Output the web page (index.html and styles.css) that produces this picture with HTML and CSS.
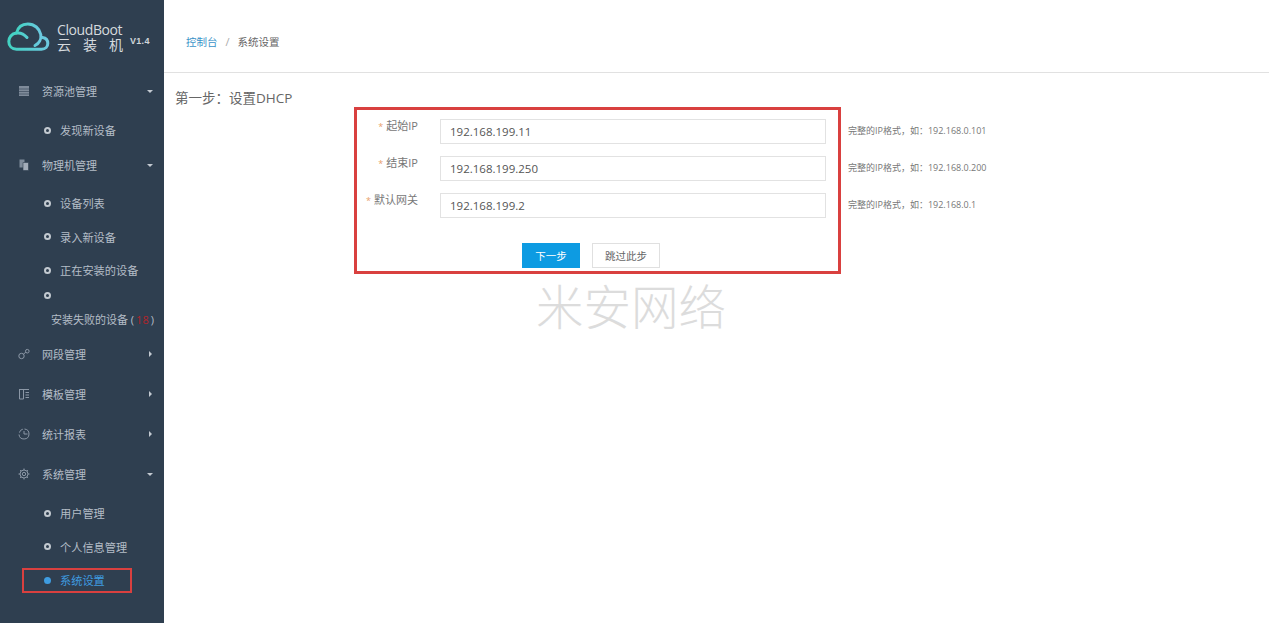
FILE: index.html
```html
<!DOCTYPE html>
<html lang="zh-CN">
<head>
<meta charset="utf-8">
<title>CloudBoot 系统设置</title>
<link rel="stylesheet" href="styles.css">
</head>
<body>
<div class="app">
  <aside class="sidebar">
    <div class="brand">
      <svg class="cloud" viewBox="0 0 44 32" width="44" height="32" aria-hidden="true">
        <defs><linearGradient id="cg" x1="0" y1="0" x2="1" y2="0"><stop offset="0" stop-color="#42d2c2"/><stop offset="1" stop-color="#6cc9e0"/></linearGradient></defs>
        <path d="M21 15.500C18 12 14 10.500 10.500 11C5.500 11.500 2.800 15.500 2.800 19.500C2.800 24 6 27.200 10.500 27.200L35.500 27.200C39.500 27.200 41.800 24.500 41.800 21.500C41.800 18.500 39.800 16 36.500 15.500" fill="none" stroke="url(#cg)" stroke-width="3" stroke-linecap="round"/>
        <path d="M10.500 11C12 5 16.500 2 21.800 2C28.500 2 33.500 6.500 34.800 12.500C35.500 17 33 21.500 29 23.500" fill="none" stroke="url(#cg)" stroke-width="3" stroke-linecap="round"/>
      </svg>
      <div class="brand-text">
        <div class="brand-en">CloudBoot</div>
        <div class="brand-cn">云装机</div>
      </div>
      <span class="brand-ver">V1.4</span>
    </div>
    <nav class="nav">
      <section class="group has-sub">
        <div class="row">
          <svg class="icon" viewBox="0 0 12 12"><path d="M1 1h10v10H1z" fill="#7f8b9a"/><path d="M1 4h10M1 6.500h10M1 9h10" stroke="#445364" stroke-width=".8"/></svg>
          <span class="row-label">资源池管理</span><i class="caret-down"></i>
        </div>
        <ul class="sub">
          <li class="sub-item"><span class="dot"></span>发现新设备</li>
        </ul>
      </section>
      <section class="group has-sub devices">
        <div class="row">
          <svg class="icon" viewBox="0 0 12 12"><path d="M1.500 0.500h5v8h-5z" fill="#7f8c9b"/><path d="M5 3.500h5.500v8H5z" fill="#a3adb9" stroke="#2f3f50" stroke-width=".6"/></svg>
          <span class="row-label">物理机管理</span><i class="caret-down"></i>
        </div>
        <ul class="sub">
          <li class="sub-item"><span class="dot"></span>设备列表</li>
          <li class="sub-item"><span class="dot"></span>录入新设备</li>
          <li class="sub-item"><span class="dot"></span>正在安装的设备</li>
          <li class="sub-item sub-wrap">
            <span class="dot"></span>
            <span class="wrap-text">安装失败的设备 (<b class="count">18</b>)</span>
          </li>
        </ul>
      </section>
      <section class="group">
        <div class="row">
          <svg class="icon" viewBox="0 0 12 12" fill="none" stroke="#8b97a6"><circle cx="3.500" cy="8" r="2.700"/><circle cx="9.300" cy="3.200" r="1.800"/><path d="M5.500 6l2.300-1.700"/></svg>
          <span class="row-label">网段管理</span><i class="caret-right"></i>
        </div>
      </section>
      <section class="group">
        <div class="row">
          <svg class="icon" viewBox="0 0 12 12" fill="none" stroke="#8b97a6"><path d="M1 1.500h10M1.500 1.500v9.500h4v-9.500"/><path d="M7.500 4.500h3.500M7.500 7h3.500M7.500 9.500h3.500"/></svg>
          <span class="row-label">模板管理</span><i class="caret-right"></i>
        </div>
      </section>
      <section class="group">
        <div class="row">
          <svg class="icon" viewBox="0 0 12 12" fill="none" stroke="#8b97a6"><path d="M6.500 1a5 5 0 1 1-5.500 5.500"/><path d="M4.800 1.200a4.500 4.500 0 0 0-3.400 3.400"/><path d="M6 3v3h3.500"/></svg>
          <span class="row-label">统计报表</span><i class="caret-right"></i>
        </div>
      </section>
      <section class="group has-sub">
        <div class="row">
          <svg class="icon" viewBox="0 0 12 12" fill="none" stroke="#8b97a6"><circle cx="6" cy="6" r="1.700"/><circle cx="6" cy="6" r="4"/><path d="M6 .5v1.500M6 10v1.500M.5 6H2M10 6h1.500M2.100 2.100l1.100 1.100M8.800 8.800l1.100 1.100M2.100 9.900l1.100-1.100M8.800 3.200l1.100-1.100"/></svg>
          <span class="row-label">系统管理</span><i class="caret-down"></i>
        </div>
        <ul class="sub">
          <li class="sub-item"><span class="dot"></span>用户管理</li>
          <li class="sub-item"><span class="dot"></span>个人信息管理</li>
          <li class="sub-item is-active"><span class="dot"></span>系统设置<span class="mark-side"></span></li>
        </ul>
      </section>
    </nav>
  </aside>
  <main class="main">
    <header class="topbar">
      <a class="crumb-link">控制台</a><span class="crumb-sep">/</span><span class="crumb-current">系统设置</span>
    </header>
    <section class="content">
      <h2 class="title">第一步：设置DHCP</h2>
      <form class="form">
        <label class="label"><em>*</em>起始IP</label>
        <input class="input" value="192.168.199.11">
        <span class="hint">完整的IP格式，如：192.168.0.101</span>
        <label class="label"><em>*</em>结束IP</label>
        <input class="input" value="192.168.199.250">
        <span class="hint">完整的IP格式，如：192.168.0.200</span>
        <label class="label"><em>*</em>默认网关</label>
        <input class="input" value="192.168.199.2">
        <span class="hint">完整的IP格式，如：192.168.0.1</span>
      </form>
      <div class="actions">
        <button class="btn btn-primary" type="button">下一步</button>
        <button class="btn btn-default" type="button">跳过此步</button>
      </div>
      <div class="mark-form"></div>
      <div class="watermark">米安网络</div>
    </section>
  </main>
</div>
</body>
</html>
```
FILE: styles.css
```css
* { box-sizing: border-box; }
html, body { margin: 0; padding: 0; height: 100%; overflow: hidden; }
body {
  background: #fff;
  color: #666;
  font-family: "Open Sans", "Noto Sans CJK SC", sans-serif;
  font-size: 11px;
}
.app { display: flex; height: 623px; }

.sidebar { width: 164px; flex: none; background: #2f3f50; color: #b4bdc7; }
.brand { height: 71px; display: flex; align-items: flex-start; padding: 22px 0 0 6px; }
.cloud { flex: none; margin-right: 7px; }
.brand-text { width: 66px; color: #d5dade; }
.brand-en { font-size: 14px; line-height: 15px; letter-spacing: -.4px; white-space: nowrap; }
.brand-cn { font-size: 14px; line-height: 16px; text-align: justify; text-align-last: justify; }
.brand-ver { margin: 14px 0 0 7px; font-size: 9px; font-weight: 700; color: #d0d5da; font-family: "Liberation Sans", sans-serif; letter-spacing: .3px; }

.group { padding: 3px 0; }
.has-sub { padding-bottom: 0; }
.row { height: 34px; display: flex; align-items: center; padding-left: 18px; position: relative; }
.icon { width: 12px; height: 12px; flex: none; margin-right: 12px; }
.row-label { flex: 1; }
.caret-down { position: absolute; left: 147px; top: 16px; border: 3px solid transparent; border-top-color: #c3cad1; border-bottom: 0; }
.caret-right { position: absolute; left: 149px; top: 14px; border: 3px solid transparent; border-left-color: #c3cad1; border-right: 0; }

.sub { list-style: none; margin: 0; padding: 7px 0 0; }
.devices .sub { padding-top: 6px; }
.sub-item { height: 30px; margin-bottom: 3.500px; display: flex; align-items: center; padding-left: 44px; position: relative; white-space: nowrap; font-size: 11.200px; }
.group:first-child .sub-item { margin-bottom: 0; }
.dot { width: 7px; height: 7px; border: 2px solid #c3cad1; border-radius: 50%; margin-right: 9px; flex: none; }
.sub-wrap { height: 45.500px; display: block; margin-bottom: 0; padding-top: 3px; font-size: 11px; }
.sub-wrap .dot { display: block; }
.wrap-text { display: block; margin: 11px 0 0 7px; line-height: 20px; }
.count { color: #b3242a; font-weight: 400; margin: 0 2px; }
.is-active { color: #3f9ce0; }
.is-active .dot { background: #3f9ce0; border-color: #3f9ce0; }
.mark-side { position: absolute; left: 22px; top: 3px; width: 110px; height: 25px; border: 2px solid #d9403f; }

.main { flex: 1; min-width: 0; }
.topbar { height: 73px; border-bottom: 1px solid #e1e1e1; display: flex; align-items: center; padding: 10px 0 0 22px; font-size: 10.500px; }
.crumb-link { color: #3a93c8; }
.crumb-sep { margin: 0 8px; color: #aaa; font-size: 11px; }
.crumb-current { color: #666; }

.content { position: relative; padding: 14px 0 0 11px; }
.title { margin: 0; font-size: 13.500px; line-height: 22px; font-weight: 400; color: #666; }
.form { display: grid; grid-template-columns: 243px 386px auto; column-gap: 22px; row-gap: 12px; margin-top: 10px; align-items: center; justify-content: start; }
.label { text-align: right; font-size: 11px; line-height: 15px; margin-top: -11px; color: #777; }
.label em { color: #e8a06a; font-style: normal; font-size: 9px; margin-right: 3px; }
.input { height: 25px; padding: 0 9px; border: 1px solid #e2e2e2; background: #fff; color: #555; font: 11.500px "Open Sans", "Noto Sans CJK SC", sans-serif; outline: 0; }
.hint { font-size: 9px; color: #777; margin-top: -2px; white-space: nowrap; }
.actions { display: flex; gap: 12px; margin: 25px 0 0 347px; }
.btn { height: 25px; padding: 0; font: 10.500px "Open Sans", "Noto Sans CJK SC", sans-serif; border-radius: 0; }
.btn-primary { width: 58px; background: #0d9be2; border: 0; color: #fff; }
.btn-default { width: 68px; background: #fff; border: 1px solid #e0e0e0; color: #666; }
.mark-form { position: absolute; left: 190px; top: 34px; width: 487px; height: 167px; border: 3px solid #d9403f; }
.watermark { position: absolute; left: 372px; top: 202px; font-size: 47.500px; line-height: 60px; font-weight: 300; color: #dcdcdc; white-space: nowrap; font-family: "Noto Sans CJK SC", sans-serif; }
```
